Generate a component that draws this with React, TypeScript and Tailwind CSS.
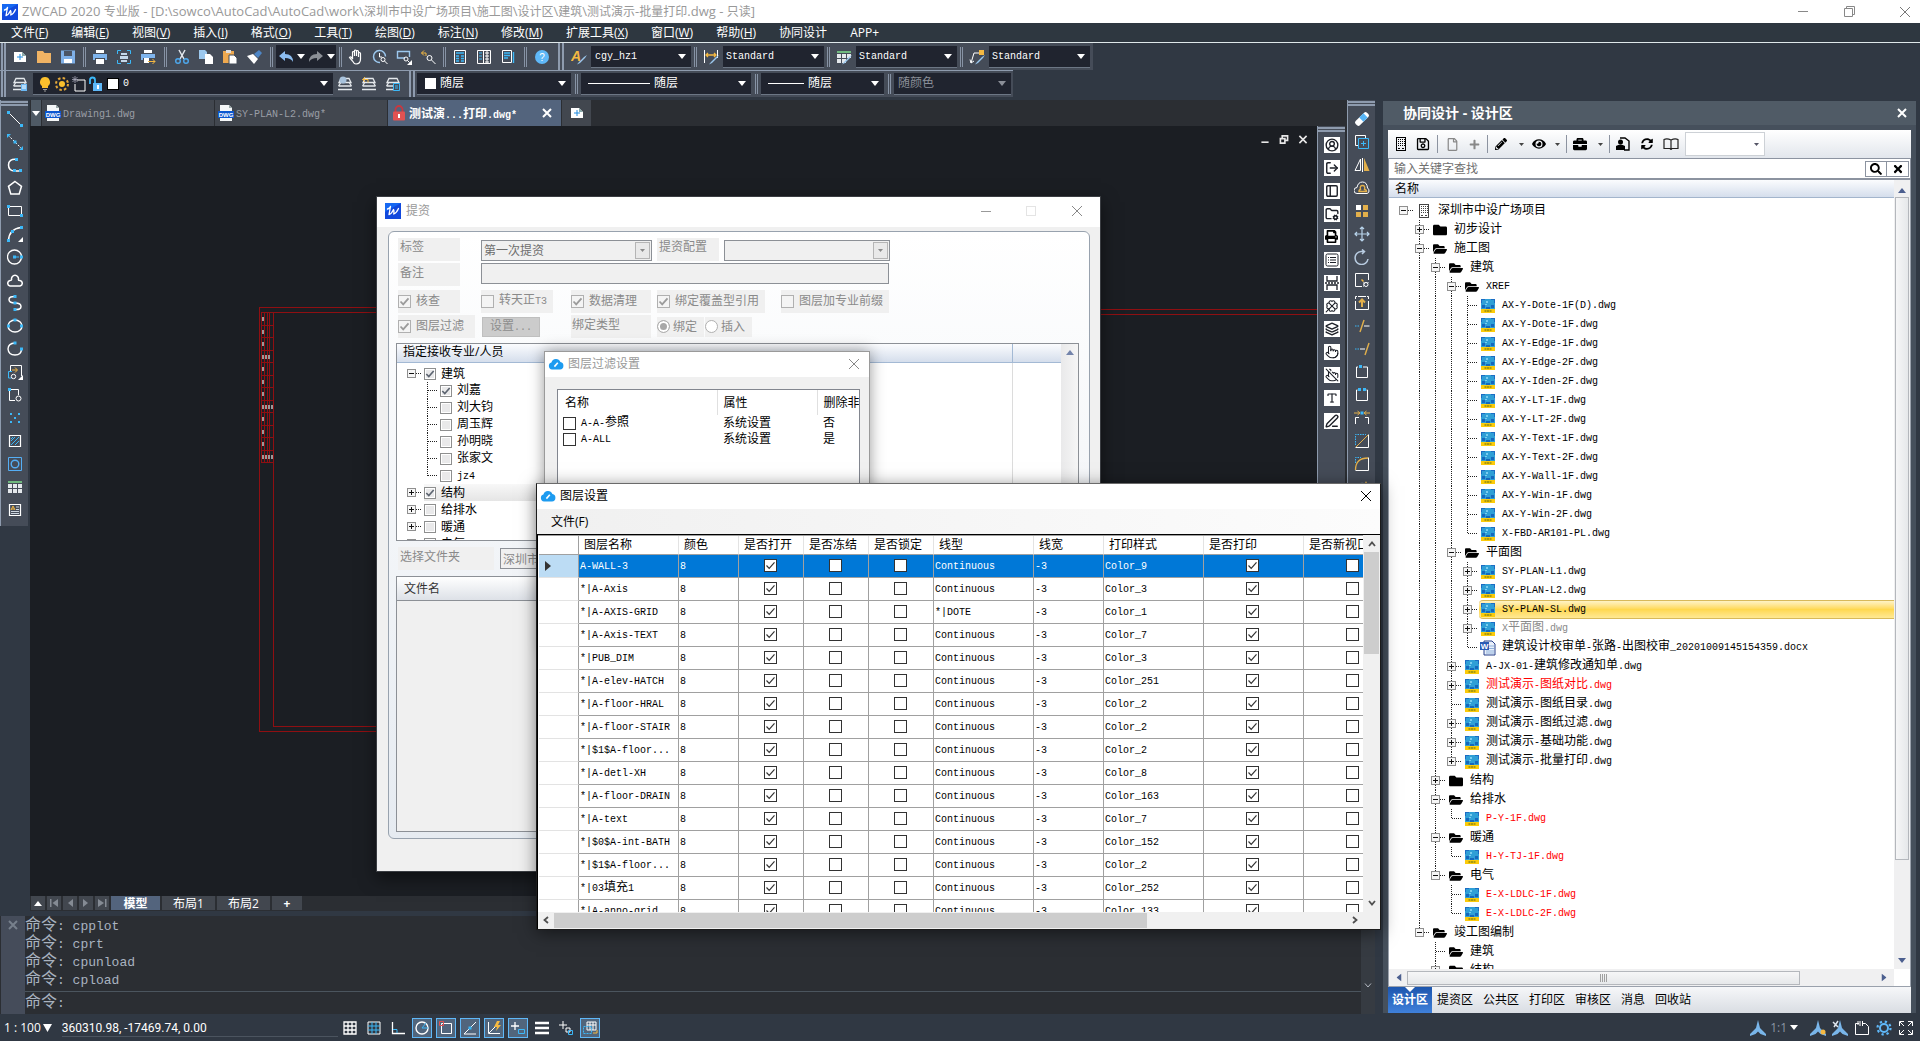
import React from "react";
import clsx from "clsx";
import {
  CircleUserRound,
  Clover,
  FolderCog,
  Layers,
  LogOut,
  PanelLeft,
  PenLine,
  Pointer,
  PointerOff,
  Type,
} from "lucide-react";
import {
  FaBriefcase,
  FaEye,
  FaFolder,
  FaFolderOpen,
  FaPencilAlt,
  FaPlus,
  FaPrint,
  FaRegFile,
  FaRegSave,
  FaSearch,
  FaSyncAlt,
  FaTimes,
} from "react-icons/fa";

const BLUE = "#3cb8f8";
const GOLD = "#e3b04b";

/* ---------- small shared parts ---------- */

// Half-width characters take 6px beside 12px ideographs (8px beside 16px ones)
const Sim = ({ text, large = false }: { text: string; large?: boolean }) => (
  <span className="font-['Liberation_Mono','Noto_Sans_CJK_SC',monospace] whitespace-pre">
    {text.split(/([\u4e00-\u9fff]+)/).map((part, i) =>
      part ? (
        <span
          key={i}
          className={
            i % 2
              ? large
                ? "text-[16px]"
                : "text-[12px]"
              : large
                ? "text-[13px]"
                : "text-[10px]"
          }
        >
          {part}
        </span>
      ) : null,
    )}
  </span>
);

interface IconProps {
  children: React.ReactNode;
  size?: string;
  className?: string;
}

const Icon = ({ children, size = "size-4", className }: IconProps) => (
  <svg
    viewBox="0 0 16 16"
    fill="none"
    stroke="#fff"
    strokeWidth="1"
    className={clsx(size, "shrink-0", className)}
  >
    {children}
  </svg>
);

const Dot = ({ x, y }: { x: number; y: number }) => (
  <rect x={x} y={y} width="3" height="3" fill={BLUE} stroke="none" />
);

const Caret = ({ className }: { className?: string }) => (
  <svg viewBox="0 0 8 5" className={clsx("w-2 h-[5px] shrink-0", className)} fill="currentColor">
    <path d="M0 0h8L4 5z" />
  </svg>
);

const Cross = ({ className }: { className?: string }) => (
  <svg viewBox="0 0 12 12" className={clsx("size-3", className)} stroke="currentColor" fill="none">
    <path d="M1 1l10 10M11 1L1 11" />
  </svg>
);

const Logo = ({ className }: { className?: string }) => (
  <svg viewBox="0 0 16 16" className={clsx("size-4 shrink-0", className)} fill="none">
    <rect width="16" height="16" fill="#1668f2" />
    <path d="M0 16V9l16-9v16z" fill="#1249dd" />
    <path
      d="M2.500 6Q5 5.500 5.500 3.500L4 11.500Q6.500 11 8.500 6.500q.8 1 .3 4.500 2.800-1 4.700-5.500"
      stroke="#fff"
      strokeWidth="1.300"
      strokeLinecap="round"
      strokeLinejoin="round"
    />
  </svg>
);

const Cloud = () => (
  <svg viewBox="0 0 16 12" className="w-4 h-3 shrink-0">
    <path d="M4 11.5a3.6 3.6 0 0 1-.6-7A4.8 4.8 0 0 1 12.4 4 3.8 3.8 0 0 1 12 11.5z" fill="#1d9bf0" />
    <path d="M6.4 8.6L9.8 4.8" stroke="#fff" strokeWidth="1.6" />
  </svg>
);

interface ComboProps {
  label: string;
  value: string;
  className?: string;
  lead?: React.ReactNode;
  muted?: boolean;
}

const Combo = ({ label, value, className, lead, muted }: ComboProps) => {
  const cjk = /[\u4e00-\u9fff]/.test(value);
  return (
    <div
      className={clsx(
        "relative flex h-[22px] items-center border-b border-[#6c7684] bg-[#20242f]",
        muted ? "text-[#8b8f98]" : "text-white",
        className,
      )}
    >
      {lead}
      <select
        aria-label={label}
        className={clsx(
          "min-w-0 flex-1 appearance-none bg-transparent outline-none font-['Liberation_Mono','Noto_Sans_CJK_SC',monospace]",
          cjk ? "text-[12px]" : "text-[10px]",
        )}
      >
        <option>{value}</option>
      </select>
      <Caret className="pointer-events-none absolute right-[5px]" />
    </div>
  );
};

interface CheckProps {
  label: string;
  checked?: boolean;
  disabled?: boolean;
  inset?: boolean;
}

const Check = ({ label, checked = false, disabled, inset }: CheckProps) => (
  <span className="inline-grid shrink-0 place-items-center">
    <input
      type="checkbox"
      aria-label={label}
      defaultChecked={checked}
      disabled={disabled}
      className={clsx(
        "col-start-1 row-start-1 appearance-none border",
        inset
          ? "size-3 border-[#8e8f8f] bg-[#e9e9ea] shadow-[inset_0_0_0_1px_#fff]"
          : disabled
            ? "size-[13px] border-[#b0b0b0] bg-[#f4f4f4]"
            : "size-[13px] border-[#333] bg-white",
      )}
    />
    {checked && (
      <svg
        viewBox="0 0 13 13"
        fill="none"
        className={clsx(
          "pointer-events-none col-start-1 row-start-1",
          inset ? "size-3 stroke-[#5c6470]" : "size-[13px]",
          !inset && (disabled ? "stroke-[#9b9b9b]" : "stroke-[#333]"),
        )}
      >
        <path d="M2.5 6.5l2.7 2.8 5.3-6" strokeWidth={inset || disabled ? 1.8 : 1.2} />
      </svg>
    )}
  </span>
);

const Grip = () => <span className="mr-0.5 ml-px h-full w-[5px] shrink-0 border-x-2 border-[#8e9bae]" />;

const Sep = ({ wide = false }: { wide?: boolean }) => (
  <span className={clsx("flex h-5 shrink-0 justify-center", wide ? "w-2.5" : "w-2")}>
    <span className="w-[3px] border-x border-[#8793a5]" />
  </span>
);

const Tool = ({ label, children, className }: { label: string; children: React.ReactNode; className?: string }) => (
  <button type="button" aria-label={label} className={clsx("grid h-6 w-6 shrink-0 place-items-center", className)}>
    {children}
  </button>
);

/* ---------- icon drawings ---------- */

const brush = <path d="M9 14l5-5 2-3-3 2-5 5-2 2.5z" fill="#9cc8ee" stroke="none" />;

const fileTools: [string, React.ReactNode][] = [
  ["新建", <><path d="M2 3h8l4 4v6H2z" fill="#fff" stroke="none" /><path d="M10 3v4h4z" fill="#8aa" stroke="none" /><path d="M8 5v6M5 8h6" stroke="#1f8be0" /></>],
  ["打开", <path d="M1 2h6l1.500 2H15v10H1z" fill="#f0b364" stroke="none" />],
  ["保存", <><path d="M1 1.500h14v13H1z" fill="#7fb0e8" stroke="none" /><path d="M4 2h8v5H4z" fill="#4b5566" stroke="none" /><path d="M4 10h8v4H4z" fill="#fff" stroke="none" /></>],
];

const printTools: [string, React.ReactNode][] = [
  ["打印", <><path d="M4 1h8v3H4zM4 10h8v5H4z" fill="#fff" stroke="none" /><path d="M1 5h14v6h-2V9H3v2H1z" fill="#7fb5ee" stroke="none" /></>],
  ["预览", <><path d="M1.500 5V1.500H5M11 1.500h3.500V5M14.500 11v3.500H11M5 14.500H1.500V11" stroke={BLUE} /><path d="M5 4h6v2H5zM4 7h8v3H4zM5 11h6v2H5z" fill="#c5d8ea" stroke="none" /></>],
  ["发布", <><path d="M4 1h8v3H4zM4 9h5v5H4z" fill="#fff" stroke="none" /><path d="M1 5h14v4H3v2H1z" fill="#7fb5ee" stroke="none" /><path d="M8 12.500h7M12.500 10l2.500 2.500-2.500 2.500" stroke="#f5b942" /></>],
];

const editTools: [string, React.ReactNode][] = [
  ["剪切", <><path d="M5 1l5 9M11 1l-5 9" stroke="#e5e9ee" strokeWidth="1.500" /><circle cx="4" cy="12" r="2.300" stroke="#4ea9ee" strokeWidth="1.400" /><circle cx="12" cy="12" r="2.300" stroke="#4ea9ee" strokeWidth="1.400" /></>],
  ["复制", <><path d="M1 1h6l2 2v7H1z" fill="#9cc8ee" stroke="none" /><path d="M7 5h5l3 3v7H7z" fill="#fff" stroke="none" /></>],
  ["粘贴", <><path d="M1 2h11v12H1z" fill="#efa94f" stroke="none" /><path d="M4 1h5v3H4z" fill="#ddd" stroke="none" /><path d="M7 6h5l3 3v6H7z" fill="#fff" stroke="#454c58" /></>],
  ["格式刷", <><path d="M8 5l5-4 3 3-4 5z" fill="#4e86c6" stroke="none" /><path d="M1 7l6-2 5 5-4 5z" fill="#fff" stroke="none" /></>],
];

const viewTools: [string, React.ReactNode][] = [
  ["平移", <path d="M4.500 9V3.500q0-1 1-1t1 1V7V2q0-1 1-1t1 1v5V2.500q0-1 1-1t1 1V8V4.500q0-1 1-1t1 1V10q0 5-4.500 5Q6 15 4.500 12L1.500 8.500q1-1.500 2 0L5 10" strokeWidth="1.200" />],
  ["缩放", <><path d="M8 13.500a6 6 0 1 1 5.500-6" stroke="#9cc8ee" strokeWidth="1.500" /><path d="M7.500 4v4H10" /><circle cx="11" cy="10.500" r="2" /><path d="M12.500 12l3 3" /></>],
  ["窗口缩放", <><path d="M9 9H1.500V2.500h12V8" stroke="#9cc8ee" strokeWidth="1.400" /><circle cx="10" cy="10" r="2" /><path d="M11.500 11.500l2 2" /><path d="M16 11v5h-5z" fill="#fff" stroke="none" /></>],
  ["上一个", <><path d="M1.500 4H6v3M4 1.500L1.500 4 4 6.500" stroke="#f5b942" /><circle cx="9.500" cy="9" r="2.500" /><path d="M11.500 11l4 4" /></>],
];

const panelTools: [string, React.ReactNode][] = [
  ["特性", <><path d="M2.500 1.500h11v13h-11z" /><path d="M4 4h8M4 7h3M9 7h3M4 9.500h3M9 9.500h3M4 12h3M9 12h3" stroke={BLUE} strokeWidth="1.500" /></>],
  ["设计中心", <><path d="M1.500 1.500h13v13h-13zM7.500 1.500v13M9 4h4M9 7h4M9 10h4M9 13h4M11 2v12" /><path d="M3 4h3M3 7h3M3 10h3" stroke={BLUE} /></>],
  ["工具选项板", <><path d="M2.500 1.500h9v12h-9z" /><path d="M4 4h6M4 6.500h6M4 9h4M13.500 3v11" stroke={BLUE} strokeWidth="1.400" /></>],
];

const drawTools: [string, React.ReactNode][] = [
  ["直线", <><path d="M2 2l12 12" /><Dot x={0} y={0} /><Dot x={13} y={13} /></>],
  ["构造线", <><path d="M1 1l14 14" strokeDasharray="2 1.500" /><path d="M0 0h4L0 4zM16 16h-4l4-4z" fill={BLUE} stroke="none" /><Dot x={6.500} y={6.500} /></>],
  ["多段线", <><path d="M10 2.500Q1.500 1.500 1.500 8q0 6 6.500 6h6" strokeWidth="1.500" /><Dot x={8} y={1} /><Dot x={6} y={12} /><Dot x={12} y={12} /></>],
  ["多边形", <path d="M8 1.500l6.500 4.800-2.300 7.700H3.800L1.500 6.300z" strokeWidth="1.500" />],
  ["矩形", <><path d="M1.500 3.500h13v9h-13z" /><Dot x={0} y={2} /><Dot x={13} y={11} /></>],
  ["圆弧", <><path d="M1.500 14.500Q2 3 14 1.500" strokeWidth="1.400" /><Dot x={0} y={13} /><Dot x={4} y={4} /><Dot x={13} y={0} /><path d="M16 11v5h-5z" fill="#fff" stroke="none" /></>],
  ["圆", <><circle cx="7.500" cy="8" r="7" strokeWidth="1.300" /><Dot x={6} y={6.500} /><Dot x={13} y={6.500} /><path d="M9 8h3" stroke={BLUE} /></>],
  ["修订云线", <path d="M3 14a2.800 2.800 0 0 1 0-5.500q1.500 0 1.600-.8a3.500 3.500 0 1 1 6.800 0q0 .8 1.600.8a2.800 2.800 0 0 1 0 5.500z" strokeWidth="1.500" />],
  ["样条曲线", <><path d="M9 1.500Q2 1 2 4.500 2 8 8 8t6 3.500Q14 15 8 14.500" strokeWidth="1.500" /><Dot x={6.500} y={0} /><Dot x={6.500} y={6.500} /><Dot x={6.500} y={13} /></>],
  ["椭圆", <><ellipse cx="8" cy="8" rx="7" ry="6" strokeWidth="1.400" /><Dot x={6.500} y={0.500} /><Dot x={0} y={6.500} /><Dot x={13} y={6.500} /></>],
  ["椭圆弧", <><path d="M8 2Q1 2.500 1 8q.5 6 7 6 6.500 0 6.500-6" strokeWidth="1.400" /><Dot x={6.500} y={0.500} /><Dot x={13} y={6.500} /></>],
  ["插入块", <><path d="M3.500 7V1.500h11V12" /><path d="M1.500 14V7.500H5M1.500 14h3" stroke={BLUE} /><path d="M5 6h5M8 3.500L10.500 6 8 8.500" stroke="#f5b942" /><circle cx="6.500" cy="12.500" r="2.200" /><path d="M16 11v5h-5z" fill="#fff" stroke="none" /></>],
  ["创建块", <><path d="M4 2.500h7.500V8M2.500 4v9.500H8" /><Dot x={1} y={1} /><circle cx="11.500" cy="11.500" r="2.500" /></>],
  ["点", <g fill={BLUE} stroke="none"><path d="M3 3h2v2H3zM11 3h2v2h-2zM7 7h2v2H7zM3 11h2v2H3zM11 11h2v2h-2z" /></g>],
  ["图案填充", <><path d="M2.500 2.500h11v11h-11z" strokeWidth="1.200" /><path d="M4 8l4-4M4 12l8-8M8 12l4-4M6 4L4 6" stroke={BLUE} /></>],
  ["面域", <><path d="M1.500 1.500h13v13h-13z" stroke="#55aef5" /><circle cx="8" cy="8" r="3.800" stroke="#55aef5" strokeWidth="1.400" /></>],
  ["表格", <><path d="M1 2h14v2H1z" fill="#6fb87f" stroke="none" /><path d="M1 5h4v4H1zM6 5h4v4H6zM11 5h4v4h-4zM1 10h4v4H1zM6 10h4v4H6zM11 10h4v4h-4z" fill="#e4e8ec" stroke="none" /></>],
  ["多行文字", <><path d="M2.500 2.500h11v11h-11z" strokeWidth="1.200" /><path d="M9 5h3M9 7.500h3M4 9.500h8M4 11.500h8" stroke="#cfd8e2" /><path d="M4 8l2-4 2 4M4.500 7h3" stroke="#f5b942" /></>],
];

const modifyTools: [string, React.ReactNode][] = [
  ["删除", <g transform="rotate(-45 8 8)" stroke="none"><rect x="0" y="5" width="16" height="6" rx="2" fill="#fff" /><rect x="7" y="5" width="6" height="6" fill="#55b4f5" /></g>],
  ["复制对象", <><path d="M4 11.500H1.500v-10h10V4" /><path d="M4.500 4.500h10v10h-10zM9.500 7v5M7 9.500h5" stroke={BLUE} /></>],
  ["镜像", <><path d="M6.500 2v11.500H1zM8.500 1v14" /><path d="M10 1v13h5.500z" fill={GOLD} stroke="none" /></>],
  ["偏移", <><path d="M3 13.500a3 3 0 0 1 0-6Q4 2 8.500 2t5 6q1.500 1 1.500 3t-2 2.500z" /><path d="M5 11.500h7.500q0-2-2-2 1-4-2-4t-2 4Q5 9.500 5 11.500z" stroke={GOLD} strokeWidth="1.400" /></>],
  ["阵列", <g stroke="none"><path d="M2 2h5v5H2z" fill="#fff" /><path d="M9 2h5v5H9zM2 9h5v5H2zM9 9h5v5H9z" fill={GOLD} /></g>],
  ["移动", <path d="M8 1v14M1 8h14M6 3l2-2 2 2M6 13l2 2 2-2M3 6L1 8l2 2M13 6l2 2-2 2" stroke="#b8d4ec" strokeWidth="1.200" />],
  ["旋转", <path d="M7 2.500A6.500 6.500 0 1 0 14 10M7 2.500h3M8 .5l2.500 2L8 5" stroke="#b8cbe0" strokeWidth="1.500" />],
  ["缩放对象", <><path d="M8 14.500H1.500v-13h13V8" /><path d="M9.500 14.500v-4h5" strokeDasharray="1 1" /><circle cx="12" cy="12.500" r="2" /><path d="M7.500 7.500l2 2" stroke="#f5b942" strokeWidth="1.500" /></>],
  ["拉伸", <><path d="M1.500 6v8.500h13V6M1.500 4V1.500H3M13 1.500h1.500V4M4 1.500h8" /><path d="M8 12V5M5 7.500L8 4.500l3 3" stroke={GOLD} strokeWidth="2" /></>],
  ["修剪", <><path d="M1 8h5" stroke={BLUE} strokeDasharray="1.500 1" /><path d="M10 8h5.500" /><path d="M6 14l4-12" stroke={GOLD} strokeWidth="1.400" /></>],
  ["延伸", <><path d="M1 8h5" stroke={BLUE} strokeDasharray="1.500 1" /><path d="M6 8h5" /><path d="M11 14l4-12" stroke={GOLD} strokeWidth="1.400" /></>],
  ["打断于点", <><path d="M4 3H2.500v10.500h11V3H9" /><Dot x={5} y={1} /></>],
  ["打断", <><path d="M3.500 3h-1v10.500h11V3h-1" /><Dot x={4} y={1} /><Dot x={9} y={1} /></>],
  ["合并", <><path d="M1.500 14V7.500H5M14.500 14V7.500H11" /><path d="M0 3h5M3.500 1L6 3 3.500 5M16 3h-5M12.500 1L10 3l2.500 2" stroke={GOLD} /><Dot x={6.500} y={1.500} /></>],
  ["倒角", <><path d="M1.500 14.500h13v-13" /><path d="M1.500 12V1.500H12" stroke={BLUE} strokeDasharray="1.500 1" /><path d="M2 14L14 2" stroke={GOLD} /></>],
  ["圆角", <><path d="M1.500 14.500h13v-13" /><path d="M1.500 7V1.500H7" stroke={BLUE} strokeDasharray="1.500 1" /><path d="M1.500 14Q1.500 2 14 2" stroke={GOLD} strokeWidth="1.300" /></>],
  ["分解", <><path d="M2 8q2-5 8-4v5H3z" fill="#9fb0c2" stroke="none" /><path d="M12 2l1 2 2 1-2 1-1 2-1-2-2-1 2-1z" fill={GOLD} stroke="none" /></>],
];

const lucideProps = { size: 14, strokeWidth: 2.4 };
const projectTools: [string, React.ReactNode][] = [
  ["用户", <CircleUserRound {...lucideProps} />],
  ["退出", <LogOut {...lucideProps} />],
  ["目录", <PanelLeft {...lucideProps} />],
  ["目录设置", <FolderCog {...lucideProps} />],
  ["打印图纸", <FaPrint size={13} color="#000" />],
  ["清单", <svg viewBox="0 0 14 14" width="14" height="14" fill="none" stroke="currentColor"><rect x="1" y="1" width="12" height="12" rx="1.500" /><path d="M3 4.500h1M5 4.500h6M3 7h1M5 7h6M3 9.500h1M5 9.500h6" /></svg>],
  ["分页", <svg viewBox="0 0 14 14" width="14" height="14" fill="none" stroke="currentColor" strokeWidth="1.300"><path d="M2 0v5h10V0M2 14V9h10v5" /><path d="M0 7h14" strokeDasharray="2 1" /></svg>],
  ["云线", <Clover {...lucideProps} strokeWidth={1.8} />],
  ["图层", <Layers {...lucideProps} />],
  ["点选", <Pointer {...lucideProps} strokeWidth={1.8} />],
  ["取消点选", <PointerOff {...lucideProps} strokeWidth={1.8} />],
  ["文字", <Type {...lucideProps} size={12} />],
  ["批注", <PenLine {...lucideProps} />],
];

const stack = <path d="M4 2.500h8l2 4H2zM2 6.500h12M1.500 10h13M1 13.500h14M3.500 7L1.500 10M12.500 7l2 3" stroke="#e4e8ec" strokeWidth="1.300" />;

/* ---------- ribbon ---------- */

const menus = [
  ["文件", "F"],
  ["编辑", "E"],
  ["视图", "V"],
  ["插入", "I"],
  ["格式", "O"],
  ["工具", "T"],
  ["绘图", "D"],
  ["标注", "N"],
  ["修改", "M"],
  ["扩展工具", "X"],
  ["窗口", "W"],
  ["帮助", "H"],
  ["协同设计", ""],
  ["APP+", ""],
];

const documentTitle =
  "ZWCAD 2020 专业版 - [D:\\sowco\\AutoCad\\AutoCad\\work\\深圳市中设广场项目\\施工图\\设计区\\建筑\\测试演示-批量打印.dwg - 只读]";

const TitleBar = () => (
  <header className="flex h-[23px] items-center bg-white pl-0.5 text-[#999]">
    <Logo />
    <h1 className="ml-1 flex-1 text-[13px] leading-5">
      {documentTitle.split(/([\u4e00-\u9fff]+)/).map((part, i) => (
        <span key={i} className={i % 2 ? "text-[12px]" : "text-[13px]"}>
          {part}
        </span>
      ))}
    </h1>
    <button type="button" aria-label="最小化" className="grid h-full w-[46px] place-items-center">
      <span className="h-px w-2.5 bg-[#888]" />
    </button>
    <button type="button" aria-label="还原" className="grid h-full w-[46px] place-items-center">
      <svg viewBox="0 0 11 11" className="size-[11px]" fill="none" stroke="#888">
        <path d="M.5 2.500h8v8h-8zM2.500 2.500v-2h8v8h-2" />
      </svg>
    </button>
    <button type="button" aria-label="关闭" className="ml-[18px] grid h-full w-[30px] place-items-center">
      <Cross className="text-[#777]" />
    </button>
  </header>
);

const MenuBar = () => (
  <nav className="flex h-5 items-center gap-[23px] border-b border-[#dfe8ea] bg-[#2e3740] pl-[11px] text-[12px] leading-4 text-white">
    {menus.map(([name, key]) => (
      <button type="button" key={name} className="whitespace-nowrap">
        {name}
        {key && (
          <>
            (<u>{key}</u>)
          </>
        )}
      </button>
    ))}
  </nav>
);

const toolList = (tools: [string, React.ReactNode][]) =>
  tools.map(([label, icon]) => (
    <Tool key={label} label={label}>
      <Icon>{icon}</Icon>
    </Tool>
  ));

const StandardBar = () => (
  <div className="flex h-[27px] w-fit items-center bg-[#454c58] pr-[3px]">
    <Grip />
    {toolList(fileTools)}
    <Sep />
    {toolList(printTools)}
    <Sep wide />
    {toolList(editTools)}
    <Sep wide />
    <div className="flex h-[23px] w-[60px] items-center justify-around bg-[#1f232e] text-white">
      <Icon><path d="M1 7l6-5v3q8 0 8 8-2-4-8-4v3z" fill="#8cbcf0" stroke="none" /></Icon>
      <Caret />
      <Icon><path d="M15 7L9 2v3Q1 5 1 13q2-4 8-4v3z" fill="#8b8f96" stroke="none" /></Icon>
      <Caret />
    </div>
    <Sep />
    {toolList(viewTools)}
    <Sep />
    {toolList(panelTools)}
    <Sep wide />
    <Tool label="帮助">
      <svg viewBox="0 0 16 16" className="size-4">
        <circle cx="8" cy="8" r="7" fill="#5fb8f8" />
        <text x="8" y="12" fontSize="10" textAnchor="middle" fill="#fff" className="font-['Liberation_Sans',sans-serif]">?</text>
      </svg>
    </Tool>
    <span className="mr-[3px] ml-1 h-full w-1.5 border-x-2 border-[#8e9bae]" />
    <Tool label="文字样式">
      <svg viewBox="0 0 16 16" className="size-4">
        <text x="0" y="12" fontSize="14" fill="#f5b942" className="font-['Liberation_Sans',sans-serif] font-bold italic">A</text>
        {brush}
      </svg>
    </Tool>
    <Combo label="文字样式" value="cgy_hz1" className="w-[100px] pl-1" />
    <Sep />
    <Tool label="标注样式">
      <Icon><path d="M1.500 1v13M14.500 1v8" /><path d="M3 6h10M5 4L3 6l2 2M11 4l2 2-2 2" stroke="#f5b942" strokeWidth="1.300" />{brush}</Icon>
    </Tool>
    <Combo label="标注样式" value="Standard" className="w-[101px] pl-[3px]" />
    <Sep />
    <Tool label="表格样式">
      <Icon><path d="M1 2h14v2H1z" fill="#6fb87f" stroke="none" /><path d="M1 5h4v4H1zM6 5h4v4H6zM11 5h4v4h-4zM1 10h4v4H1zM6 10h4v4H6z" fill="#e4e8ec" stroke="none" />{brush}</Icon>
    </Tool>
    <Combo label="表格样式" value="Standard" className="w-[101px] pl-[3px]" />
    <Sep />
    <Tool label="引线样式">
      <Icon><path d="M2 14l3-10h5M1 10.500L2 14l3-2" /><path d="M10 1h5v5h-5z" fill="#f5b942" stroke="none" />{brush}</Icon>
    </Tool>
    <Combo label="引线样式" value="Standard" className="w-[101px] pl-[3px]" />
  </div>
);

const LayerBar = () => (
  <div className="flex h-[27px] w-fit items-center border-t border-[#8e9bae] bg-[#454c58] pr-0.5">
    <Grip />
    <Tool label="图层特性">
      <Icon>{stack}<path d="M9 8h6v7H9z" fill="#6cb8f4" stroke="none" /><path d="M10 10h4M10 12h4" /></Icon>
    </Tool>
    <Combo
      label="当前图层"
      value="0"
      className="ml-px w-[300px] pl-1"
      lead={
        <div className="mr-1 flex items-center gap-px">
          <Icon><path d="M8 1a5 5 0 0 1 3 9v2H5v-2a5 5 0 0 1 3-9z" fill="#fbc02d" stroke="none" /><path d="M6 13.500h4M7 15h2" stroke="#999" /></Icon>
          <Icon><circle cx="8" cy="8" r="3" fill="#fbc02d" stroke="none" /><circle cx="8" cy="8" r="6" stroke="#e3a83a" strokeWidth="2" strokeDasharray="2.500 2.200" /></Icon>
          <Icon><path d="M6 4h8v11H4V8" /><path d="M4 0v7M1 3.500h6M1.500 1l5 5M6.500 1l-5 5" stroke="#aab" strokeWidth=".8" /></Icon>
          <Icon><path d="M2 8V4q0-2.500 2.500-2.500T7 4v3" stroke={BLUE} strokeWidth="1.800" /><path d="M5 7h9v8H5z" fill="#5fb8f8" stroke="none" /><path d="M9 9h2v4H9z" fill="#fff" stroke="none" /></Icon>
          <span className="ml-0.5 size-3 border border-black bg-white" />
        </div>
      }
    />
    <Tool label="置为当前"><Icon>{stack}<circle cx="6" cy="4" r="3.500" fill="#a8c2dc" stroke="none" /></Icon></Tool>
    <Tool label="上一图层"><Icon>{stack}<path d="M1.500 3.500H7v3M4 1L1.500 3.500 4 6" stroke="#f5b942" /></Icon></Tool>
    <Tool label="图层状态"><Icon>{stack}<path d="M8.500 7.500h6v7h-6zM10 10h3M10 12h3" stroke={BLUE} fill="#454c58" /></Icon></Tool>
    <span className="mr-0.5 ml-1 h-full w-1.5 shrink-0 border-x-2 border-[#8e9bae]" />
    <Combo label="颜色" value="随层" className="w-[154px] pl-2" lead={<span className="mr-1 size-[11px] bg-white" />} />
    <Sep wide />
    <Combo label="线型" value="随层" className="w-[170px] pl-[7px]" lead={<span className="mr-1 h-px w-[62px] bg-white" />} />
    <Sep wide />
    <Combo label="线宽" value="随层" className="w-[123px] pl-[7px]" lead={<span className="mr-1 h-px w-9 bg-white" />} />
    <Sep wide />
    <Combo label="打印颜色" value="随颜色" muted className="w-[117px] pl-1" />
  </div>
);

/* ---------- drawing area ---------- */

const DwgFile = () => (
  <svg viewBox="0 0 16 16" className="size-4 shrink-0">
    <path d="M2 0h9l3 3v13H2z" fill="#f5f7f8" />
    <path d="M11 0v3h3z" fill="#9aa" />
    <rect y="6" width="16" height="7" fill="#0b57d0" />
    <text x="8" y="12" fontSize="6" textAnchor="middle" fill="#fff" className="font-['Liberation_Sans',sans-serif] font-bold">DWG</text>
  </svg>
);

const FileTabs = () => (
  <div className="flex h-[26px] gap-px bg-[#2b2e33] pl-px">
    <button type="button" aria-label="图纸列表" className="grid w-2.5 place-items-center bg-[#4f5a65] text-white">
      <Caret className="h-[7px]" />
    </button>
    {["Drawing1.dwg", "SY-PLAN-L2.dwg*"].map((name) => (
      <button type="button" key={name} className="flex w-[172px] items-center gap-0.5 bg-[#42474f] pl-[3px] text-[#9a9ea6]">
        <DwgFile />
        <Sim text={name} />
      </button>
    ))}
    <div className="flex w-[173px] items-center bg-[#53647d] pl-[3px] text-white">
      <svg viewBox="0 0 16 16" className="mr-0.5 size-4 shrink-0">
        <path d="M4.500 7V4.500a3.500 3.500 0 0 1 7 0V7" fill="none" stroke="#c9383f" strokeWidth="1.800" />
        <rect x="2" y="6.500" width="12" height="9" rx="1" fill="#e05252" />
        <path d="M7 9h2v4H7z" fill="#fff" />
      </svg>
      <button type="button" className="flex-1 text-left font-bold">
        <Sim text="测试演...打印.dwg*" />
      </button>
      <button type="button" aria-label="关闭图纸" className="mr-[9px]">
        <svg viewBox="0 0 10 10" className="size-2.5" stroke="#fff" strokeWidth="2">
          <path d="M1 1l8 8M9 1L1 9" />
        </svg>
      </button>
    </div>
    <button type="button" aria-label="新建图纸" className="grid w-[29px] place-items-center bg-[#42474f]">
      <Icon>{fileTools[0][1]}</Icon>
    </button>
  </div>
);

const titleBlockRows = Array.from({ length: 13 }, (_, i) => 186 + Math.round(i * 12.5));

const Drawing = () => (
  <svg className="absolute inset-0 size-full" fill="none" stroke="#8f0f12" shapeRendering="crispEdges">
    <path d="M400 181.500H229.500v424H400M400 186.500H243.500v414H400" />
    <path d="M1060 183.500H1289M1060 188.500H1289" />
    <path d="M231.500 186v150M234.500 186v150M237.500 186v150M239.500 186v150" />
    {titleBlockRows.map((y) => (
      <path key={y} d={`M231 ${y + 0.5}h12`} />
    ))}
    {titleBlockRows.slice(0, 12).map((y, i) => (
      <path
        key={y}
        d={`M232 ${y + 6.5}h${i === 3 ? 8 : i === 7 || i === 11 ? 11 : 2}`}
        stroke="#9a9a9a"
        strokeWidth="4"
        strokeDasharray="2 1"
      />
    ))}
  </svg>
);

const Canvas = () => (
  <div className="relative flex-1 overflow-hidden bg-[#1b1e23]">
    <Drawing />
    <div className="relative flex justify-end gap-[7px] pt-[9px] pr-2 text-[#e8e8e8]">
      {[
        ["最小化图纸", "M1 8h8"],
        ["还原图纸", "M1 4h5v5H1zM3 4V1h6v5H6"],
        ["关闭", "M1 1l8 8M9 1L1 9"],
      ].map(([label, d]) => (
        <button type="button" key={label} aria-label={label}>
          <svg viewBox="0 0 10 10" className="h-[9px] w-3" fill="none" stroke="currentColor" strokeWidth="1.800">
            <path d={d} />
          </svg>
        </button>
      ))}
    </div>
  </div>
);

const LayoutTabs = () => (
  <div className="flex h-[15px] gap-0.5 bg-[#2b2e33] pl-px pb-px text-[12px] leading-[13px] text-white">
    {[
      ["上移", "M1 8h8L5 3z"],
      ["第一个", "M1 1h1.500v8H1zM9 1v8L3.500 5z"],
      ["前一个", "M8 1v8L3 5z"],
      ["后一个", "M2 1v8l5-4z"],
      ["最后一个", "M8 1h1.500v8H8zM1 1v8l6-4z"],
    ].map(([label, d], i) => (
      <button type="button" key={label} aria-label={label} className="grid w-3.5 place-items-center bg-[#42474f]">
        <svg viewBox="0 0 10 10" className="size-2.5" fill={i ? "#858b94" : "#fff"}>
          <path d={d} />
        </svg>
      </button>
    ))}
    <button type="button" className="w-[49px] bg-[#53647d] font-bold">模型</button>
    <button type="button" className="w-[53px] bg-[#42474f]">布局1</button>
    <button type="button" className="w-[53px] bg-[#42474f]">布局2</button>
    <button type="button" className="w-[30px] bg-[#42474f] font-bold">+</button>
  </div>
);

const CommandLine = () => (
  <section className="mt-[5px] flex h-[98px] bg-[#2b2e33] pl-px text-[#a9b3c0]">
    <button type="button" aria-label="关闭命令行" className="flex w-6 justify-center bg-[#454c5a] pt-1 text-[#77808c]">
      <svg viewBox="0 0 10 10" className="size-2.5" stroke="currentColor" strokeWidth="2">
        <path d="M1 1l8 8M9 1L1 9" />
      </svg>
    </button>
    <div className="flex-1">
      <div className="h-[75px]">
        {["cpplot", "cprt", "cpunload", "cpload"].map((cmd) => (
          <p key={cmd} className="h-[18px] text-[16px] leading-4">
            <Sim large text={"命令: " + cmd} />
          </p>
        ))}
      </div>
      <div className="flex h-[23px] items-center border-t border-[#4b555e] pb-0.5 leading-4">
        <label htmlFor="command">
          <Sim large text="命令:" />
        </label>
        <input id="command" className="ml-2 flex-1 bg-transparent text-[13px] outline-none" />
      </div>
    </div>
    <div className="flex w-3.5 flex-col items-center justify-end bg-[#363b42] pb-[26px]">
      <svg viewBox="0 0 8 5" className="h-[5px] w-2" fill="none" stroke="#b4bac2">
        <path d="M1 .5l3 3.500 3-3.500" />
      </svg>
    </div>
    <span className="w-2 bg-[#303843]" />
  </section>
);

const ToolColumn = ({ children, className }: { children: React.ReactNode; className?: string }) => (
  <div className={clsx("flex w-7 shrink-0 flex-col items-center border-l border-[#8e9bae] bg-[#454c58]", className)}>
    <span className="mt-px mb-px h-[5px] w-full shrink-0 border-y-2 border-[#8e9bae]" />
    {children}
  </div>
);

/* ---------- project panel ---------- */

interface TreeRow {
  level: number;
  name: string;
  icon: "building" | "folder" | "open" | "dwg" | "doc";
  toggle?: "+" | "-";
  tone?: "red" | "gray" | "selected";
}

const xrefs = [
  "AX-Y-Dote-1F(D).dwg",
  "AX-Y-Dote-1F.dwg",
  "AX-Y-Edge-1F.dwg",
  "AX-Y-Edge-2F.dwg",
  "AX-Y-Iden-2F.dwg",
  "AX-Y-LT-1F.dwg",
  "AX-Y-LT-2F.dwg",
  "AX-Y-Text-1F.dwg",
  "AX-Y-Text-2F.dwg",
  "AX-Y-Wall-1F.dwg",
  "AX-Y-Win-1F.dwg",
  "AX-Y-Win-2F.dwg",
  "X-FBD-AR101-PL.dwg",
];

const tree: TreeRow[] = [
  { level: 0, name: "深圳市中设广场项目", icon: "building", toggle: "-" },
  { level: 1, name: "初步设计", icon: "folder", toggle: "+" },
  { level: 1, name: "施工图", icon: "open", toggle: "-" },
  { level: 2, name: "建筑", icon: "open", toggle: "-" },
  { level: 3, name: "XREF", icon: "open", toggle: "-" },
  ...xrefs.map((name): TreeRow => ({ level: 4, name, icon: "dwg" })),
  { level: 3, name: "平面图", icon: "open", toggle: "-" },
  { level: 4, name: "SY-PLAN-L1.dwg", icon: "dwg", toggle: "+" },
  { level: 4, name: "SY-PLAN-L2.dwg", icon: "dwg", toggle: "+" },
  { level: 4, name: "SY-PLAN-SL.dwg", icon: "dwg", toggle: "+", tone: "selected" },
  { level: 4, name: "X平面图.dwg", icon: "dwg", toggle: "+", tone: "gray" },
  { level: 4, name: "建筑设计校审单-张路-出图校审_20201009145154359.docx", icon: "doc" },
  { level: 3, name: "A-JX-01-建筑修改通知单.dwg", icon: "dwg", toggle: "+" },
  { level: 3, name: "测试演示-图纸对比.dwg", icon: "dwg", toggle: "+", tone: "red" },
  { level: 3, name: "测试演示-图纸目录.dwg", icon: "dwg" },
  { level: 3, name: "测试演示-图纸过滤.dwg", icon: "dwg", toggle: "+" },
  { level: 3, name: "测试演示-基础功能.dwg", icon: "dwg", toggle: "+" },
  { level: 3, name: "测试演示-批量打印.dwg", icon: "dwg", toggle: "+" },
  { level: 2, name: "结构", icon: "folder", toggle: "+" },
  { level: 2, name: "给排水", icon: "open", toggle: "-" },
  { level: 3, name: "P-Y-1F.dwg", icon: "dwg", tone: "red" },
  { level: 2, name: "暖通", icon: "open", toggle: "-" },
  { level: 3, name: "H-Y-TJ-1F.dwg", icon: "dwg", tone: "red" },
  { level: 2, name: "电气", icon: "open", toggle: "-" },
  { level: 3, name: "E-X-LDLC-1F.dwg", icon: "dwg", tone: "red" },
  { level: 3, name: "E-X-LDLC-2F.dwg", icon: "dwg", tone: "red" },
  { level: 1, name: "竣工图编制", icon: "open", toggle: "-" },
  { level: 2, name: "建筑", icon: "open" },
  { level: 2, name: "结构", icon: "folder", toggle: "+" },
];

// true when another node of this level follows before its parent ends
const continues = (index: number, level: number) => {
  for (let i = index + 1; i < tree.length; i++) {
    if (tree[i].level < level) return false;
    if (tree[i].level === level) return true;
  }
  return false;
};

const Toggle = ({ sign, label }: { sign: "+" | "-"; label: string }) => (
  <button
    type="button"
    aria-label={label}
    className="z-10 col-start-1 row-start-1 size-[9px] shrink-0 border border-[#8f8f8f] bg-[#f6f6f6]"
  >
    <svg viewBox="0 0 7 7" className="block size-[7px]" stroke="#111" shapeRendering="crispEdges">
      <path d={sign === "+" ? "M1 3.500h5M3.500 1v5" : "M1 3.500h5"} />
    </svg>
  </button>
);

const Building = ({ className }: { className?: string }) => (
  <svg viewBox="0 0 12 14" className={clsx("h-3.5 w-3 shrink-0", className)} shapeRendering="crispEdges">
    <path d="M1.500 .5h9v13h-9z" fill="none" stroke="currentColor" />
    <path d="M3 2.500h1M5 2.500h1M7 2.500h1M9 2.500h1M3 4.500h1M5 4.500h1M7 4.500h1M9 4.500h1M3 6.500h1M5 6.500h1M7 6.500h1M9 6.500h1M3 8.500h1M5 8.500h1M7 8.500h1M9 8.500h1M3 11.500h2M7 11.500h2" stroke="currentColor" />
  </svg>
);

const TreeIcon = ({ kind }: { kind: TreeRow["icon"] }) => {
  if (kind === "building") return <Building className="mx-px text-[#444]" />;
  if (kind === "folder") return <FaFolder className="size-3.5 shrink-0 text-black" />;
  if (kind === "open") return <FaFolderOpen className="size-3.5 shrink-0 text-black" />;
  if (kind === "doc")
    return (
      <svg viewBox="0 0 16 16" className="-mr-px -ml-px size-4 shrink-0">
        <path d="M4 1h8l3 3v11H4z" fill="#e9f0fa" stroke="#27408b" />
        <path d="M9 6h5M9 8.500h5M6 11h8M6 13h8" stroke="#8fb1dc" />
        <rect x="0" y="2" width="9" height="8" fill="#2b5bb5" />
        <text x="4.500" y="9" fontSize="8" textAnchor="middle" fill="#fff" className="font-['Liberation_Sans',sans-serif] font-bold">W</text>
      </svg>
    );
  return (
    <svg viewBox="0 0 14 14" className="size-3.5 shrink-0">
      <rect width="14" height="10" fill="#2f9fd6" />
      <path d="M0 0h4v1H1v3H0zM10 0h4v4h-1V1h-3z" fill="#1c6cc4" />
      <path d="M1 6h3v3H1zM10 6h3v3h-3zM5 8h4v2H5z" fill="#1668bd" />
      <path d="M5 2h2v2H5zM4 5h2v1H4z" fill="#79cdef" />
      <rect y="10" width="14" height="4" fill="#fccb0a" />
      <path d="M3.500 12h7" stroke="#8d8a12" strokeWidth="1.500" strokeDasharray="2 .5" />
    </svg>
  );
};

const TreeLine = ({ row, index }: { row: TreeRow; index: number }) => (
  <li className="flex h-[19px] items-center pl-[7px]">
    {Array.from({ length: row.level }, (_, c) => (
      <svg key={c} className="h-[19px] w-4 shrink-0" shapeRendering="crispEdges" stroke="#222" strokeDasharray="1 1">
        {c > 0 && continues(index, c) && <path d="M7.500 0v19" />}
      </svg>
    ))}
    <span className="grid h-[19px] w-[21px] shrink-0 items-center">
      <svg className="col-start-1 row-start-1 h-[19px] w-[21px]" shapeRendering="crispEdges" stroke="#222" strokeDasharray="1 1">
        {row.level > 0 && <path d={continues(index, row.level) ? "M7.500 0v19" : "M7.500 0v10"} />}
        <path d="M8 9.500h9" />
      </svg>
      {row.toggle && (
        <span className="z-10 col-start-1 row-start-1 ml-[3px] flex">
          <Toggle sign={row.toggle} label={"展开 " + row.name} />
        </span>
      )}
    </span>
    <span
      className={clsx(
        "flex h-[19px] flex-1 items-center gap-[7px] text-[12px] leading-[18px]",
        row.tone === "red" && "text-[#f00]",
        row.tone === "gray" && "text-[#8a8a8a]",
        row.tone === "selected" &&
          "-ml-0.5 rounded-l-sm border-y border-[#d8b95a] bg-linear-to-b from-[#fff3c4] via-[#ffd84f] to-[#ffe993] pl-0.5",
      )}
    >
      <TreeIcon kind={row.icon} />
      <Sim text={row.name} />
    </span>
  </li>
);

const PanelSep = ({ tight }: { tight?: boolean }) => (
  <span className={clsx("h-[18px] w-px bg-[#8c93a0]", tight ? "mx-px" : "mx-1")} />
);

const panelButton = "grid h-6 place-items-center";

const ProjectPanel = () => (
  <aside className="mt-px mr-1 mb-px flex w-[533px] shrink-0 flex-col bg-[#46505c]">
    <div className="flex h-6 items-center justify-between bg-[#505b66] pr-[9px] pl-5 text-white">
      <h2 className="text-[14px] leading-6 font-bold">协同设计 - 设计区</h2>
      <button type="button" aria-label="关闭面板">
        <svg viewBox="0 0 10 10" className="size-2.5" stroke="#fff" strokeWidth="2">
          <path d="M1 1l8 8M9 1L1 9" />
        </svg>
      </button>
    </div>
    <div className="mx-[5px] mt-[5px] flex min-h-0 flex-1 flex-col bg-white text-black">
      <div className="flex h-[29px] shrink-0 items-center border-b border-[#8c93a0] bg-linear-to-b from-white to-[#e2e6ec] pl-px">
        <button type="button" aria-label="项目" className={clsx(panelButton, "w-6")}><Building /></button>
        <button type="button" aria-label="保存" className={clsx(panelButton, "w-5")}><FaRegSave size={14} /></button>
        <PanelSep />
        <button type="button" aria-label="新建文件" className={clsx(panelButton, "w-5 text-[#888]")}><FaRegFile size={13} /></button>
        <button type="button" aria-label="添加" className={clsx(panelButton, "w-6 text-[#888]")}><FaPlus size={11} /></button>
        <PanelSep tight />
        <button type="button" aria-label="编辑" className={clsx(panelButton, "w-6")}><FaPencilAlt size={12} /></button>
        <button type="button" aria-label="编辑选项" className={clsx(panelButton, "w-4 text-[#444]")}><Caret className="w-[5px]" /></button>
        <button type="button" aria-label="查看" className={clsx(panelButton, "w-5")}><FaEye size={14} /></button>
        <button type="button" aria-label="查看选项" className={clsx(panelButton, "w-4 text-[#444]")}><Caret className="w-[5px]" /></button>
        <PanelSep tight />
        <button type="button" aria-label="公文包" className={clsx(panelButton, "w-6")}><FaBriefcase size={14} /></button>
        <button type="button" aria-label="公文包选项" className={clsx(panelButton, "w-4 text-[#444]")}><Caret className="w-[5px]" /></button>
        <PanelSep tight />
        <button type="button" aria-label="人员" className={clsx(panelButton, "w-6")}>
          <svg viewBox="0 0 14 14" className="size-3.5">
            <path d="M4 1h5l4 3v9H8" fill="none" stroke="#000" strokeWidth="1.400" />
            <circle cx="4.500" cy="5" r="2.500" />
            <path d="M0 13V9q4.500-3 9 0v4z" />
          </svg>
        </button>
        <button type="button" aria-label="刷新" className={clsx(panelButton, "w-6")}><FaSyncAlt size={12} /></button>
        <button type="button" aria-label="阅读" className={clsx(panelButton, "w-6")}>
          <svg viewBox="0 0 16 12" className="h-3 w-4" fill="none" stroke="#222" strokeWidth="1.200">
            <path d="M8 10.500V2Q4 0 1 1.500v9h6l1 1 1-1h6v-9Q12 0 8 2" />
          </svg>
        </button>
        <div className="relative ml-0.5 flex h-6 w-20 items-center border border-[#cdd1d6] bg-white">
          <select aria-label="筛选" className="size-full appearance-none outline-none">
            <option />
          </select>
          <Caret className="pointer-events-none absolute right-[5px] w-[5px] text-[#556]" />
        </div>
      </div>
      <div className="flex h-[21px] shrink-0 items-center border-x border-b-2 border-[#8c93a0] pr-px pl-[5px]">
        <input
          aria-label="查找"
          placeholder="输入关键字查找"
          className="min-w-0 flex-1 text-[12px] leading-4 outline-none placeholder:text-[#707070]"
        />
        <button type="button" aria-label="搜索" className="grid h-4 w-[22px] place-items-center border border-[#8c93a0]"><FaSearch size={12} /></button>
        <button type="button" aria-label="清除" className="grid h-4 w-[22px] place-items-center border border-l-0 border-[#8c93a0]"><FaTimes size={12} /></button>
      </div>
      <div className="flex min-h-0 flex-1 border-x border-[#9aa1ac]">
        <div className="flex min-w-0 flex-1 flex-col">
          <div className="h-[18px] shrink-0 border-b border-[#a3b5cc] bg-linear-to-b from-[#fbfcfe] to-[#d5deec] pl-1.5 text-[12px] leading-[17px]">名称</div>
          <ul className="min-h-0 flex-1 overflow-hidden pt-[3px]">
            {tree.map((row, i) => (
              <TreeLine key={i} row={row} index={i} />
            ))}
          </ul>
        </div>
        <div className="flex w-4 flex-col items-center bg-[#f0f0f1] pt-2 pb-1.5 text-[#4c5f8f]">
          <Caret className="mb-1 shrink-0 rotate-180" />
          <span className="w-3.5 flex-[662] border border-[#b4b7bc] bg-linear-to-r from-[#f6f6f7] to-[#e6e8ea]" />
          <span className="flex-[98]" />
          <Caret />
        </div>
      </div>
      <div className="flex h-[18px] shrink-0 items-center border-x border-b border-[#9aa1ac]">
        <div className="flex h-full flex-1 items-center bg-[#f0f0f1] px-[6px] text-[#4c5f8f]">
          <Caret className="rotate-90" />
          <span className="ml-1 grid h-3.5 flex-[393] place-items-center border border-[#b4b7bc] bg-linear-to-b from-[#f6f6f7] to-[#e6e8ea]">
            <span className="h-2 w-[7px] bg-[repeating-linear-gradient(90deg,#a0a0a0_0_1px,transparent_1px_2px)]" />
          </span>
          <span className="flex-[80]" />
          <Caret className="-rotate-90" />
        </div>
        <span className="w-4" />
      </div>
      <div className="flex h-[26px] shrink-0 bg-linear-to-b from-[#f6f7f9] to-[#d9dde3] text-[12px] leading-[26px]" role="tablist">
        <button type="button" role="tab" className="flex w-[44px] flex-col items-center bg-linear-to-b from-[#1d56ae] to-[#3f80da] font-bold text-white">
          <svg viewBox="0 0 10 5" className="-mb-[5px] h-[5px] w-2.5 shrink-0" fill="#fff">
            <path d="M0 0h10L5 5z" />
          </svg>
          设计区
        </button>
        {["提资区", "公共区", "打印区", "审核区", "消息", "回收站"].map((name) => (
          <button type="button" role="tab" key={name} className="px-[5px]">
            {name}
          </button>
        ))}
      </div>
    </div>
  </aside>
);

/* ---------- status bar ---------- */

const statusTools: [string, boolean, React.ReactNode][] = [
  ["捕捉", false, <path d="M2 2h12v12H2zM6 2v12M10 2v12M2 6h12M2 10h12" strokeWidth="1.300" />],
  ["栅格", false, <><path d="M2 2v12M14 2v12M2 2h12M2 14h12" /><path d="M6 2v12M10 2v12M2 6h12M2 10h12" stroke={BLUE} /></>],
  ["正交", false, <><path d="M2.500 2v11.500H15" strokeWidth="1.300" /><path d="M3 9.500h4V13" stroke={BLUE} /></>],
  ["极轴", true, <><circle cx="8" cy="8" r="6" strokeWidth="1.400" /><path d="M8 8h6M8 8l4-5" stroke={BLUE} /></>],
  ["对象捕捉", true, <><path d="M3.500 3.500h10v10h-10z" /><path d="M1.500 1.500h4v4h-4z" stroke="#e05252" /></>],
  ["追踪", true, <><path d="M14 2L2 14h12" /><Dot x={6.500} y={6.500} /></>],
  ["动态UCS", true, <><path d="M2.500 2v11.500H14M3 13L9 7" /><path d="M11 1L8 7h3l-1 4 5-6h-3l2-4z" fill="#f5b942" stroke="none" /></>],
  ["动态输入", true, <><path d="M5 2v8M1 6h8" strokeWidth="1.300" /><path d="M8.500 9.500h6v4h-6z" stroke={BLUE} /></>],
  ["线宽显示", false, <path d="M1 3h14M1 8h14M1 13h14" strokeWidth="2.500" />],
  ["循环选择", false, <><path d="M5 1v8M1 5h8" /><path d="M8 8h4v4H8z" /><path d="M10.500 10.500h4v4h-4z" stroke={BLUE} /></>],
  ["切换", true, <><path d="M5 2h9v8H5zM5 5h9M8 2v8M11 2v8" /><path d="M1.500 6.500h8v7h-8z" stroke={BLUE} strokeDasharray="2 1" /><path d="M15 10v3h-4" stroke="#f5b942" /></>],
];

const ArrowMark = () => <path d="M8 0l2 8 6 6v2l-5.500-2L8 11.500 5.500 14 0 16v-2l6-6z" fill="#79b6ea" stroke="none" />;

const StatusBar = () => (
  <footer className="flex h-[27px] items-center bg-[#303843] text-[12px] leading-4 text-white">
    <button type="button" className="ml-1 flex items-center gap-0.5 whitespace-pre">
      1 : 100
      <svg viewBox="0 0 9 8" className="h-2 w-[9px]" fill="#fff">
        <path d="M0 0h9L4.500 8z" />
      </svg>
    </button>
    <output className="ml-2.5 w-[276px] border-b border-[#4b545f] pt-0.5 text-[12px] font-['Roboto',sans-serif]">
      360310.98, -17469.74, 0.00
    </output>
    <div className="ml-0.5 flex flex-1 gap-1">
      {statusTools.map(([label, on, icon]) => (
        <button
          type="button"
          key={label}
          aria-label={label}
          className={clsx("grid size-5 place-items-center", on && "border border-[#5fb8f8] bg-[#51657c]")}
        >
          <Icon>{icon}</Icon>
        </button>
      ))}
    </div>
    <div className="flex items-center pr-1.5">
      <Icon className="mr-1"><ArrowMark /></Icon>
      <button type="button" className="mr-3 flex items-center gap-[3px] text-[#8b95a3]">
        1:1
        <Caret className="text-white" />
      </button>
      <div className="flex gap-1.5">
        <Icon><ArrowMark /><circle cx="13" cy="12" r="2.500" fill="#f5b942" stroke="none" /></Icon>
        <Icon><ArrowMark /><path d="M1 2l5 5M6 1L2 7" stroke="#dfe6ee" strokeWidth="1.500" /></Icon>
        <Icon><path d="M5 3.500H1.500v11h13v-8l-3-3H9M6 1v5M8.500 1v5M4 1v4" /></Icon>
        <Icon><circle cx="8" cy="8" r="4" stroke="#5fb8f8" strokeWidth="2" /><circle cx="8" cy="8" r="6.500" stroke="#5fb8f8" strokeWidth="2.200" strokeDasharray="2.300 2.800" /></Icon>
        <Icon><path d="M1.500 6V1.500H6M10 1.500h4.500V6M14.500 10v4.500H10M6 14.500H1.500V10M2 2l4 4M14 2l-4 4M14 14l-4-4M2 14l4-4" /></Icon>
      </div>
    </div>
  </footer>
);

/* ---------- dialogs ---------- */

const field = "h-[21px] border border-[#8c9096] bg-[#f0f0f0]";

const DisabledSelect = ({ id, label, value, className }: { id: string; label: string; value: string; className: string }) => (
  <div className={clsx(field, "relative flex items-center", className)}>
    <select id={id} aria-label={label} disabled className="size-full appearance-none px-0.5 text-[12px] leading-4 text-[#6d6d6d]">
      <option>{value}</option>
    </select>
    <span className="pointer-events-none absolute right-px grid h-[17px] w-[15px] place-items-center border border-[#b5b5b5] bg-[#e9e9e9] text-[#8a8a8a]">
      <Caret className="h-[3px] w-[5px]" />
    </span>
  </div>
);

const Option = ({ name, checked, className }: { name: string; checked?: boolean; className: string }) => (
  <label className={clsx("flex h-[23px] items-center gap-[5px] bg-[#f0f0f0] whitespace-nowrap", className)}>
    <Check label={name} checked={checked} disabled />
    <Sim text={name} />
  </label>
);

const Radio = ({ name, checked }: { name: string; checked?: boolean }) => (
  <label className="flex h-5 w-[47px] items-center gap-[3px] bg-[#f0f0f0]">
    <input
      type="radio"
      name="bind"
      disabled
      defaultChecked={checked}
      className="size-[13px] appearance-none rounded-full border border-[#b0b0b0] bg-white checked:bg-[#a8a8a8] checked:shadow-[inset_0_0_0_2px_#fff]"
    />
    {name}
  </label>
);

const members = ["刘嘉", "刘大钧", "周玉辉", "孙明晓", "张家文", "jz4"];

const WindowButton = ({ label, children, className }: { label: string; children: React.ReactNode; className: string }) => (
  <button type="button" aria-label={label} className={clsx("grid h-full shrink-0 place-items-center", className)}>
    {children}
  </button>
);

const GroupRow = ({ name, checked, open, hover }: { name: string; checked?: boolean; open?: boolean; hover?: boolean }) => (
  <div className="flex h-[17px] items-center pl-2.5">
    <Toggle sign={open ? "-" : "+"} label={"展开 " + name} />
    <svg className="h-[17px] w-2" stroke="#222" strokeDasharray="1 1" shapeRendering="crispEdges">
      <path d="M0 8.500h6" />
    </svg>
    <span className={clsx("flex h-[17px] flex-1 items-center gap-[5px]", hover && "bg-linear-to-b from-[#f8f8f8] to-[#e5e5e5]")}>
      <Check label={name} checked={checked} disabled inset />
      {name}
    </span>
  </div>
);

const SubmitDialog = () => (
  <section className="absolute top-[196px] left-[376px] flex h-[676px] w-[725px] flex-col border border-[#3a3d42] bg-[#f0f0f0] text-[12px] leading-4 text-[#8a8a8a] shadow-[0_6px_16px_rgba(0,0,0,0.5)]">
    <div className="flex h-[30px] shrink-0 items-center bg-white pb-0.5 pl-2">
      <Logo />
      <h2 className="ml-[5px] flex-1 text-[#999]">提资</h2>
      <WindowButton label="最小化提资" className="w-[45px]"><span className="h-px w-2.5 bg-[#999]" /></WindowButton>
      <WindowButton label="最大化提资" className="w-[45px]"><span className="size-2.5 border border-[#e4e4e4]" /></WindowButton>
      <WindowButton label="关闭提资" className="w-[47px]"><Cross className="text-[#888]" /></WindowButton>
    </div>
    <fieldset
      disabled
      className="mt-1 mr-2.5 mb-8 ml-[11px] flex min-h-0 flex-1 flex-col rounded-md border border-[#98a2ae] bg-linear-to-b from-white to-[#e6ebf1] pr-2.5 pl-[7px]"
    >
      <div className="mt-[5px] flex h-6 items-end pl-0.5">
        <label htmlFor="tag" className="mr-[21px] h-[23px] w-[62px] bg-[#f0f0f0] pt-px pl-0.5">标签</label>
        <DisabledSelect id="tag" label="标签" value="第一次提资" className="w-[171px]" />
        <label htmlFor="config" className="mx-[5px] h-[23px] w-[62px] bg-[#f0f0f0] pt-px pl-0.5">提资配置</label>
        <DisabledSelect id="config" label="提资配置" value="" className="w-[166px]" />
      </div>
      <div className="mt-0.5 flex h-[23px] pl-0.5">
        <label htmlFor="note" className="mr-[21px] w-[62px] bg-[#f0f0f0] pt-0.5 pl-0.5">备注</label>
        <input id="note" className={clsx(field, "w-[408px]")} />
      </div>
      <div className="mt-1 flex pl-0.5">
        <Option name="核查" checked className="mr-[21px] w-[62px]" />
        <Option name="转天正T3" className="mr-[18px] w-[72px]" />
        <Option name="数据清理" checked className="mr-1.5 w-20" />
        <Option name="绑定覆盖型引用" checked className="mr-4 w-[108px]" />
        <Option name="图层加专业前缀" className="w-[108px]" />
      </div>
      <div className="mt-0.5 flex items-center pl-0.5">
        <Option name="图层过滤" checked className="mr-[7px] w-[77px]" />
        <button type="button" className="mr-[31px] h-5 w-[58px] border border-[#bfbfbf] bg-[#cccccc] text-[#8e8e8e]">
          <Sim text="设置..." />
        </button>
        <span className="mr-1.5 h-[23px] w-20 bg-[#f0f0f0] pt-0.5 pl-px">绑定类型</span>
        <Radio name="绑定" checked />
        <span className="w-px" />
        <Radio name="插入" />
      </div>
      <div className="mt-[5px] flex h-[198px] shrink-0 border border-[#8c9096] bg-white text-black">
        <div className="flex min-w-0 flex-1 flex-col overflow-hidden">
          <div className="flex h-[19px] shrink-0 border-b border-[#a3b9d4] bg-linear-to-b from-[#fbfcfe] to-[#d5deec]">
            <span className="w-[616px] border-r border-[#a3b9d4] pl-1.5 leading-4">指定接收专业/人员</span>
          </div>
          <div className="w-[616px] flex-1 border-r border-[#dcdcdc] pt-0.5">
            <GroupRow name="建筑" checked open />
            {members.map((name, i) => (
              <label key={name} className="flex h-[17px] items-center">
                <svg className="h-[17px] w-[43px] shrink-0" stroke="#222" strokeDasharray="1 1" shapeRendering="crispEdges">
                  <path d={i < members.length - 1 ? "M30.500 0v17M31 8.500h9" : "M30.500 0v9M31 8.500h9"} />
                </svg>
                <Check label={name} checked={i === 0} disabled inset />
                <span className="ml-[5px]"><Sim text={name} /></span>
              </label>
            ))}
            <GroupRow name="结构" checked hover />
            <GroupRow name="给排水" />
            <GroupRow name="暖通" />
            <GroupRow name="电气" />
          </div>
        </div>
        <div className="flex w-[17px] flex-col items-center bg-linear-to-r from-[#e9e9ea] to-[#f6f6f6] pt-1.5 text-[#7484ab]">
          <Caret className="rotate-180" />
        </div>
      </div>
      <div className="mt-1.5 flex h-[23px] items-center pl-0.5">
        <label htmlFor="folder" className="mr-1.5 h-[23px] w-24 bg-[#f0f0f0] pt-0.5 pl-0.5">选择文件夹</label>
        <input id="folder" defaultValue="深圳市中设广场项目" className={clsx(field, "flex-1 px-0.5 text-[12px]")} />
      </div>
      <div className="my-1.5 min-h-0 flex-1 border border-[#8c9096] bg-[#f0f0f0] text-[#333]">
        <div className="h-6 border-b border-[#8c9096] bg-linear-to-b from-white to-[#dde1e7] pl-[7px] leading-6">文件名</div>
      </div>
    </fieldset>
  </section>
);

const FilterDialog = () => (
  <section className="absolute top-[351px] left-[544px] h-[300px] w-[326px] border border-[#9a9a9a] bg-[#f0f0f0] text-[12px] leading-4 shadow-[0_0_14px_rgba(0,0,0,0.4)]">
    <div className="flex h-[25px] items-center bg-white pb-0.5 pl-[3px]">
      <Cloud />
      <h2 className="ml-1 flex-1 text-[#999]">图层过滤设置</h2>
      <WindowButton label="关闭图层过滤设置" className="w-[31px]"><Cross className="text-[#888]" /></WindowButton>
    </div>
    <div className="mr-[9px] ml-3 mt-3 h-[240px] overflow-hidden border border-[#82868f] bg-white pl-[3px] text-black">
      <table className="w-[400px] table-fixed">
        <thead>
          <tr className="h-[25px] text-left">
            <th className="w-[156px] border-r border-[#e0e0e0] pl-1 font-normal">名称</th>
            <th className="w-[100px] border-r border-[#e0e0e0] pl-1.5 font-normal">属性</th>
            <th className="pl-1.5 font-normal">删除非</th>
          </tr>
        </thead>
        <tbody>
          {[
            ["A-A-参照", "否"],
            ["A-ALL", "是"],
          ].map(([name, value]) => (
            <tr key={name} className="h-4">
              <td className="flex h-4 items-center gap-[5px] pl-0.5">
                <Check label={name} />
                <Sim text={name} />
              </td>
              <td className="pl-1.5">系统设置</td>
              <td className="pl-1.5">{value}</td>
            </tr>
          ))}
        </tbody>
      </table>
    </div>
  </section>
);

const layers: [string, string, string][] = [
  ["A-WALL-3", "Continuous", "Color_9"],
  ["*|A-Axis", "Continuous", "Color_3"],
  ["*|A-AXIS-GRID", "*|DOTE", "Color_1"],
  ["*|A-Axis-TEXT", "Continuous", "Color_7"],
  ["*|PUB_DIM", "Continuous", "Color_3"],
  ["*|A-elev-HATCH", "Continuous", "Color_251"],
  ["*|A-floor-HRAL", "Continuous", "Color_2"],
  ["*|A-floor-STAIR", "Continuous", "Color_2"],
  ["*|$1$A-floor...", "Continuous", "Color_2"],
  ["*|A-detl-XH", "Continuous", "Color_8"],
  ["*|A-floor-DRAIN", "Continuous", "Color_163"],
  ["*|A-text", "Continuous", "Color_7"],
  ["*|$0$A-int-BATH", "Continuous", "Color_152"],
  ["*|$1$A-floor...", "Continuous", "Color_2"],
  ["*|03填充1", "Continuous", "Color_252"],
  ["*|A-anno-grid", "Continuous", "Color_133"],
];

const columns = [
  ["图层名称", "w-[100px]"],
  ["颜色", "w-[60px]"],
  ["是否打开", "w-[65px]"],
  ["是否冻结", "w-[65px]"],
  ["是否锁定", "w-[65px]"],
  ["线型", "w-[100px]"],
  ["线宽", "w-[70px]"],
  ["打印样式", "w-[100px]"],
  ["是否打印", "w-[100px]"],
  ["是否新视口冻结", "w-[100px]"],
];

const LayerRow = ({ layer, selected }: { layer: [string, string, string]; selected: boolean }) => {
  const [name, linetype, style] = layer;
  const base = clsx("border-r border-b border-[#a0a0a0]", selected && "bg-[#0078d7] text-white");
  const cell = clsx(base, "pl-px");
  const box = (label: string, checked: boolean) => (
    <td className={clsx(base, "pr-0.5 text-center leading-none")}>
      <Check label={name + " " + label} checked={checked} />
    </td>
  );
  return (
    <tr className="h-[23px]">
      <td className={clsx("border-r border-b border-r-[#a0a0a0] border-b-[#e3e3e3]", selected && "bg-[#bcdcf4]")}>
        {selected && (
          <svg viewBox="0 0 6 10" className="ml-1.5 h-2.5 w-1.5" fill="#333">
            <path d="M0 0l6 5-6 5z" />
          </svg>
        )}
      </td>
      <td className={cell}><Sim text={name} /></td>
      <td className={cell}><Sim text="8" /></td>
      {box("打开", true)}
      {box("冻结", false)}
      {box("锁定", false)}
      <td className={cell}><Sim text={linetype} /></td>
      <td className={cell}><Sim text="-3" /></td>
      <td className={cell}><Sim text={style} /></td>
      {box("打印", true)}
      {box("新视口冻结", false)}
    </tr>
  );
};

const Chevron = ({ className }: { className?: string }) => (
  <svg viewBox="0 0 8 6" className={clsx("h-1.5 w-2 shrink-0", className)} fill="none" stroke="#505050" strokeWidth="1.800">
    <path d="M1 1l3 3.500L7 1" />
  </svg>
);

const LayerDialog = () => (
  <section className="absolute top-[483px] left-[536px] flex h-[447px] w-[845px] flex-col border border-[#1c1c1c] border-t-[#6a6a6a] bg-white text-[12px] leading-4 text-black shadow-[0_3px_16px_rgba(0,0,0,0.5)]">
    <div className="flex h-[25px] shrink-0 items-center pb-0.5 pl-[3px]">
      <Cloud />
      <h2 className="ml-1 flex-1">图层设置</h2>
      <WindowButton label="关闭图层设置" className="w-[28px]"><Cross /></WindowButton>
    </div>
    <div className="flex h-[25px] shrink-0 items-center bg-linear-to-r from-[#f0f0f0] to-[#fcfcfc] pl-3.5">
      <button type="button">文件(F)</button>
    </div>
    <div className="flex min-h-0 flex-1 border-t border-l border-black">
      <div className="flex min-w-0 flex-1 flex-col">
        <div className="min-h-0 flex-1 overflow-hidden border-t border-[#a0a0a0] pl-px">
          <table className="w-[865px] table-fixed border-separate border-spacing-0">
            <thead>
              <tr className="h-[19px] text-left">
                <th aria-label="行" className="w-10 border-r border-b border-[#a0a0a0]" />
                {columns.map(([name, width]) => (
                  <th
                    key={name}
                    className={clsx(
                      "overflow-hidden border-r border-b border-r-[#e3e3e3] border-b-[#a0a0a0] pl-[5px] font-normal whitespace-nowrap",
                      width,
                    )}
                  >
                    {name}
                  </th>
                ))}
              </tr>
            </thead>
            <tbody>
              {layers.map((layer, i) => (
                <LayerRow key={i} layer={layer} selected={i === 0} />
              ))}
            </tbody>
          </table>
        </div>
        <div className="flex h-[17px] shrink-0 items-center bg-[#f0f0f0] pb-px">
          <span className="grid w-4 place-items-center"><Chevron className="rotate-90" /></span>
          <span className="h-[15px] flex-[593] bg-[#cdcdcd]" />
          <span className="flex-[200]" />
          <span className="grid w-4 place-items-center"><Chevron className="-rotate-90" /></span>
        </div>
      </div>
      <div className="flex w-[17px] flex-col items-center bg-[#f0f0f0] pt-[6px] pb-[23px]">
        <Chevron className="rotate-180" />
        <span className="mt-[5px] w-[15px] flex-[102] bg-[#cdcdcd]" />
        <span className="flex-[246]" />
        <Chevron />
      </div>
    </div>
  </section>
);

/* ---------- page ---------- */

const App = () => (
  <div className="relative flex h-screen flex-col overflow-hidden bg-[#303843] font-['Open_Sans','Noto_Sans_CJK_SC',sans-serif]">
    <TitleBar />
    <MenuBar />
    <StandardBar />
    <LayerBar />
    <main className="mt-[3px] flex min-h-0 flex-1">
      <div className="flex min-w-0 flex-1 flex-col">
        <div className="flex min-h-0 flex-1">
          <div className="w-[30px] shrink-0">
            <ToolColumn className="h-[426px]">
              {drawTools.map(([label, icon]) => (
                <Tool key={label} label={label} className="h-[23px]">
                  <Icon>{icon}</Icon>
                </Tool>
              ))}
            </ToolColumn>
          </div>
          <div className="flex min-w-0 flex-1">
            <div className="flex min-w-0 flex-1 flex-col">
              <FileTabs />
              <Canvas />
              <LayoutTabs />
            </div>
            <div className="flex bg-[#2b2e33] pt-[26px] pr-0.5">
              <ToolColumn>
                {projectTools.map(([label, icon]) => (
                  <Tool key={label} label={label} className="h-[23px]">
                    <span className="grid size-4 place-items-center bg-white text-[#1d2028]">{icon}</span>
                  </Tool>
                ))}
              </ToolColumn>
            </div>
            <ToolColumn className="mr-2">
              {modifyTools.map(([label, icon]) => (
                <Tool key={label} label={label} className="h-[23px]">
                  <Icon>{icon}</Icon>
                </Tool>
              ))}
            </ToolColumn>
          </div>
        </div>
        <CommandLine />
      </div>
      <ProjectPanel />
    </main>
    <StatusBar />
    <SubmitDialog />
    <FilterDialog />
    <LayerDialog />
  </div>
);

export default App;
